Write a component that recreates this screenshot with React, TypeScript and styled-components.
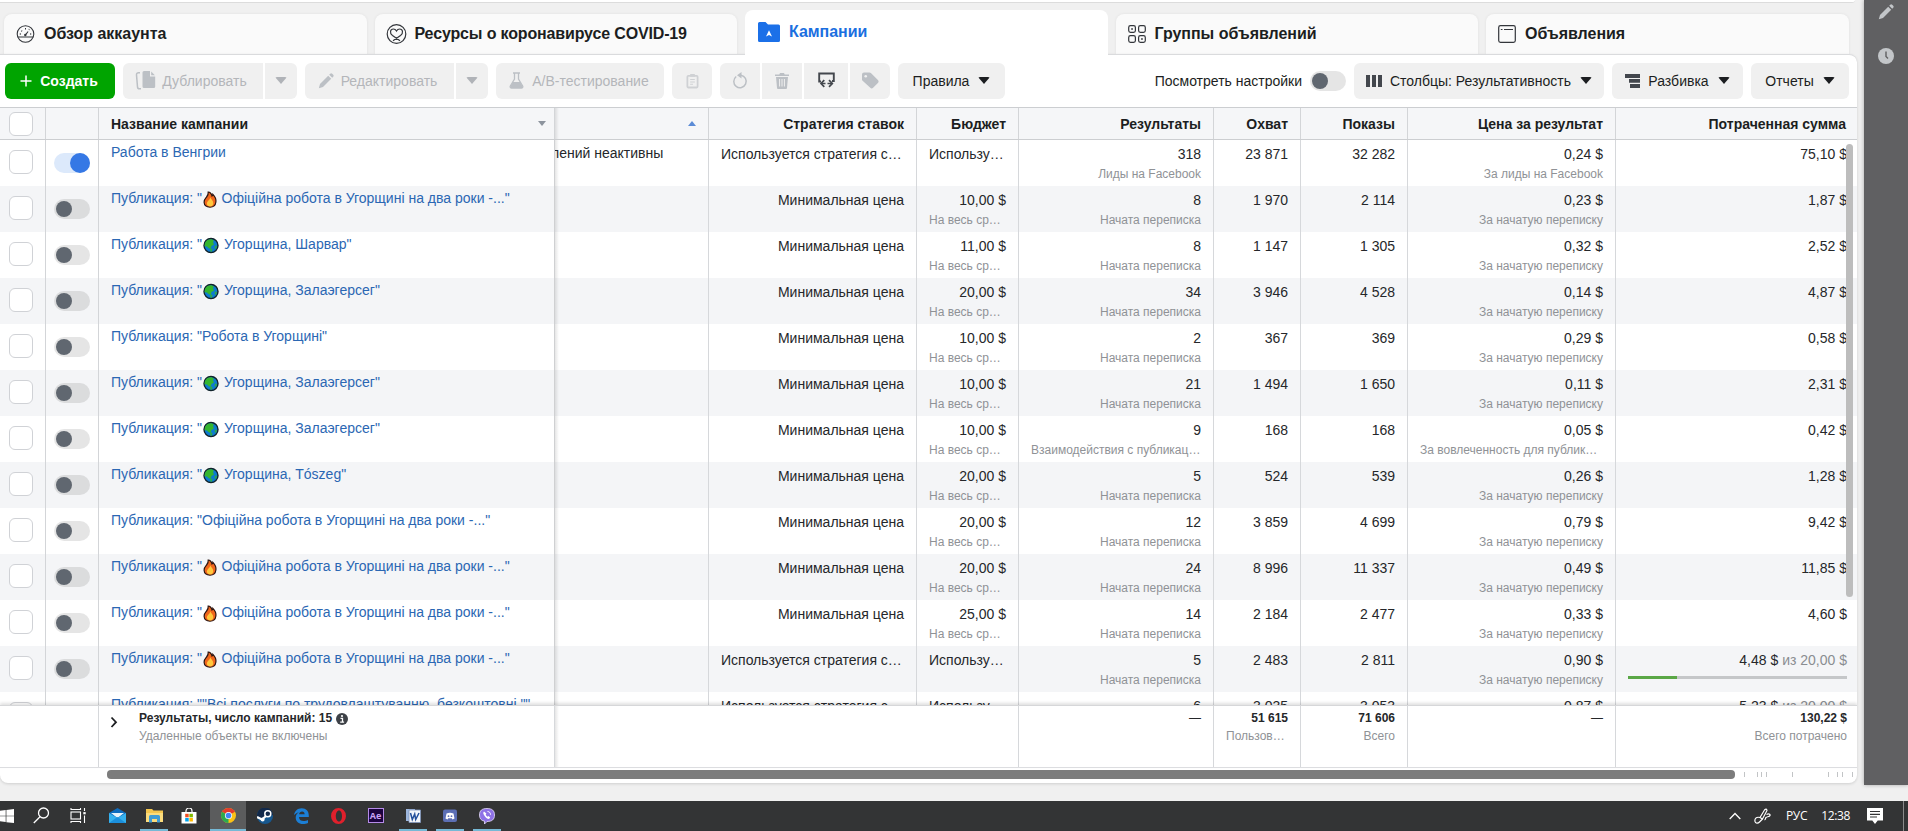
import React from 'react';
import styled, { createGlobalStyle, css } from 'styled-components';

const Global = createGlobalStyle`
  * { box-sizing: border-box; }
  html, body { margin: 0; padding: 0; overflow: hidden; }
  body { background: #f0f0f0; font-family: "Liberation Sans", Arial, sans-serif; font-size: 14px; color: #1c1e21; }
`;

/* ---------- page frame ---------- */
const Screen = styled.div`
  width: 1908px; height: 831px; overflow: hidden;
  display: flex; flex-direction: column;
`;
const Desktop = styled.div`
  height: 801px; display: flex; align-items: flex-start; background: #f0f0f0;
`;
const Main = styled.div`
  width: 1857px; height: 801px; display: flex; flex-direction: column;
`;
const TopStrip = styled.div`
  width: 1855px; height: 3px; flex: none; background: #fff;
  border-bottom: 1px solid #dcdcdc; border-radius: 0 0 6px 0;
`;
const SideRail = styled.div`
  width: 44px; height: 785px; margin-left: 7px; background: #606062;
  box-shadow: 0 0 4px rgba(0, 0, 0, .3);
  display: flex; flex-direction: column; align-items: center;
  padding-top: 4px; gap: 28px; svg { display: block; }
`;

/* ---------- tabs ---------- */
const Tabs = styled.div`
  height: 51px; flex: none; display: flex; align-items: flex-end; gap: 8px; padding-left: 4px;
`;
const Tab = styled.div<{ $active?: boolean; $tight?: boolean }>`
  width: 362.5px; height: 40px; flex: none; display: flex; align-items: center;
  padding: 0 0 1px ${p => (p.$tight ? 11 : 12)}px; gap: ${p => (p.$tight ? 8 : 9)}px;
  font-size: 16px; font-weight: 700; letter-spacing: ${p => (p.$tight ? -0.15 : -0.03)}px; white-space: nowrap;
  background: #fafafa; border-radius: 8px 8px 0 0; color: #1c1e21;
  box-shadow: 0 0 3px rgba(0, 0, 0, .07);
  svg { flex: none; }
  ${p => p.$active && css`
    height: 45px; margin-bottom: -1px; padding: 0 0 2px 13px; background: #fff; color: #1b6fe0; z-index: 1; box-shadow: none;
  `}
`;

/* ---------- panel ---------- */
const Panel = styled.div`
  height: 729px; flex: none; background: #fff; border-top: 1px solid #dadbdd;
  border-radius: 0 8px 8px 8px; box-shadow: 0 1px 3px rgba(0, 0, 0, .14);
  display: flex; flex-direction: column; overflow: hidden;
`;
const Toolbar = styled.div`
  height: 52px; flex: none; padding: 8px 8px 0 5px; display: flex; gap: 8px;
`;
const Group = styled.div`display: flex; gap: 2px; height: 36px;`;
const Spacer = styled.div`flex: 1;`;
const Btn = styled.div<{ $w: number; $dim?: boolean; $green?: boolean; $pos?: 'first' | 'mid' | 'last'; $gap?: number; $pr?: number }>`
  width: ${p => p.$w}px; height: 36px; flex: none; display: flex; align-items: center; justify-content: center;
  gap: ${p => p.$gap ?? 8}px; padding: 0 ${p => p.$pr || 0}px 1px 0;
  white-space: nowrap; background: ${p => (p.$green ? '#00a400' : '#f0f0f0')};
  color: ${p => (p.$green ? '#fff' : p.$dim ? '#b4b6ba' : '#1c1e21')};
  font-weight: ${p => (p.$green ? 700 : 400)};
  border-radius: ${p => (p.$pos === 'first' ? '6px 0 0 6px' : p.$pos === 'mid' ? '0' : p.$pos === 'last' ? '0 6px 6px 0' : '6px')};
  svg { flex: none; }
`;
const SettingsLabel = styled.div`
  display: flex; align-items: center; height: 36px; gap: 8px; white-space: nowrap;
`;
const Caret = styled.i<{ $c?: string; $ml?: number }>`
  border: 6px solid transparent; border-bottom: 0; border-top: 7px solid ${p => p.$c || '#1c1e21'};
  border-radius: 2px; margin: 0 0 0 ${p => p.$ml || 0}px;
`;
const SortMark = styled.i<{ $up?: boolean }>`
  border: 4px solid transparent;
  ${p => (p.$up ? 'border-top: 0; border-bottom: 5px solid #5b8bd6;' : 'border-bottom: 0; border-top: 5px solid #8d949e; margin-right: -4px;')}
`;

/* ---------- table ---------- */
const columns = '46px 53px 456px 154px 208px 102px 195px 87px 107px 208px 241px';
const edgeShade = 'linear-gradient(90deg, rgba(0, 0, 0, .1), rgba(0, 0, 0, 0) 4px)';
const HeadRow = styled.div`
  height: 33px; flex: none; display: grid; grid-template-columns: ${columns};
  background: #f5f6f8; border-top: 1px solid #ccced1; border-bottom: 1px solid #ccced1;
`;
const HeadCell = styled.div<{ $between?: boolean; $shade?: boolean }>`
  display: flex; align-items: center; justify-content: ${p => (p.$between ? 'space-between' : 'flex-end')};
  padding: 0 12px; font-weight: 700; white-space: nowrap; border-right: 1px solid #d3d5d8;
  background: ${p => (p.$shade ? edgeShade : 'none')};
  &:last-child { border-right: 0; padding-right: 11px; }
`;
const Body = styled.div`
  position: relative; height: 565px; flex: none; overflow: hidden;
`;
const Row = styled.div<{ $alt: boolean }>`
  height: 46px; display: grid; grid-template-columns: ${columns};
  background: ${p => (p.$alt ? '#f4f5f7' : '#fff')};
`;
const Cell = styled.div`
  padding: 6px 12px 0 12px; border-right: 1px solid #d6d8db; overflow: hidden; white-space: nowrap;
  text-align: right; color: #25272a;
  &:last-child { border-right: 0; padding-right: 10px; }
`;
const NameCell = styled(Cell)`
  border-right-color: #cfd0d2; padding-top: 4px; text-align: left;
`;
const StatusCell = styled(Cell)`
  padding: 5px 0 0; text-align: left; text-indent: -4px; line-height: 16px; background: ${edgeShade};
`;
const IconCell = styled.div<{ $pt: number; $pl?: number }>`
  border-right: 1px solid #d3d5d8; display: flex; align-items: flex-start;
  padding: ${p => p.$pt}px 0 0 ${p => p.$pl ?? 9}px;
`;
const Name = styled.div`
  color: #2b67b3; height: 16px; line-height: 16px;
  svg { vertical-align: -3px; margin: -2px 0; }
`;
const Value = styled.div<{ $left?: boolean }>`
  height: 16px; line-height: 16px; text-align: ${p => (p.$left ? 'left' : 'right')};
  i { font-style: normal; color: #8a8d91; }
`;
const Sub = styled.div<{ $left?: boolean }>`
  margin-top: 5px; height: 15px; line-height: 15px; font-size: 12px; color: #8f9296;
  text-align: ${p => (p.$left ? 'left' : 'right')};
`;
const CheckBox = styled.div`
  width: 24px; height: 24px; border: 1px solid #d0d2d6; border-radius: 6px; background: #fff;
`;
const Track = styled.div<{ $on?: boolean }>`
  width: 36px; height: 20px; border-radius: 10px; flex: none; display: flex; align-items: center;
  padding: ${p => (p.$on ? 0 : '0 2px')}; justify-content: ${p => (p.$on ? 'flex-end' : 'flex-start')};
  background: ${p => (p.$on ? '#dce9fb' : 'rgba(0, 0, 0, .1)')};
  &::after {
    content: ''; border-radius: 50%;
    width: ${p => (p.$on ? 20 : 16)}px; height: ${p => (p.$on ? 20 : 16)}px;
    background: ${p => (p.$on ? '#3578e5' : '#606770')};
  }
`;
const Progress = styled.div`
  margin-top: 8px; width: 219px; height: 3px; background: #c5c7c9;
  &::before { content: ''; display: block; width: 49px; height: 3px; background: #5aa746; }
`;
const VScroll = styled.div`
  position: absolute; right: 4px; top: 4px; width: 7px; height: 453px; border-radius: 4px; background: #bdbdbd; z-index: 2;
`;

/* ---------- footer ---------- */
const Foot = styled.div`
  height: 63px; flex: none; display: grid; position: relative; z-index: 2; background: #fff;
  grid-template-columns: 99px 456px 464px 195px 87px 107px 208px 241px;
  border-top: 1px solid #d6d7d9; border-bottom: 1px solid #dcdde0; box-shadow: 0 -2px 3px rgba(0, 0, 0, .12);
`;
const FootCell = styled(Cell)<{ $shade?: boolean }>`
  padding-top: 5px; font-size: 12px; background: ${p => (p.$shade ? edgeShade : 'none')};
  b, span { display: block; height: 15px; line-height: 15px; }
  span { margin-top: 3px; color: #8f9296; }
`;
const FootNote = styled.span<{ $left?: boolean }>`
  text-align: ${p => (p.$left ? 'left' : 'inherit')};
`;
const FootTitle = styled(FootCell)`
  display: flex; gap: 20px; text-align: left; padding-left: 11px;
  b { display: flex; align-items: center; gap: 4px; }
`;
const ScrollRow = styled.div`
  flex: 1; padding: 2px 4px 0 107px; display: flex; align-items: flex-start;
`;
const HThumb = styled.div`width: 1628px; height: 9px; border-radius: 4px; background: #7c7c7c; flex: none;`;

/* ---------- taskbar ---------- */
const Taskbar = styled.div`
  height: 30px; flex: none; background: #333435; display: flex; color: #fff;
`;
const Task = styled.div<{ $w: number; $ml?: number; $state?: 'open' | 'active' }>`
  width: ${p => p.$w}px; height: 30px; display: flex; align-items: center; justify-content: center;
  margin-left: ${p => p.$ml || 0}px; padding-bottom: 1px;
  background-color: ${p => (p.$state === 'active' ? '#5b5c5d' : 'transparent')};
  background-image: ${p => (p.$state ? 'linear-gradient(#76b9d6, #76b9d6)' : 'none')};
  background-repeat: no-repeat; background-position: center bottom;
  background-size: ${p => (p.$state === 'active' ? '100%' : '28px')} 2px;
  flex: none;
`;
const Tray = styled.div`
  margin-left: auto; display: flex; align-items: center; font: 12px "Open Sans", "Noto Sans", sans-serif;
  padding-right: 4px; letter-spacing: -0.35px;
`;
const TrayItem = styled.div<{ $ml: number }>`
  margin-left: ${p => p.$ml}px; padding-bottom: 1px; display: flex; white-space: nowrap;
`;
const Peek = styled.div`width: 1px; height: 30px; background: #8a8a8a; margin-left: 20px;`;

/* ---------- pictures ---------- */
const Fire = () => (
  <svg width="19.500" height="17" viewBox="0 0 19.500 17">
    <path d="M6.200 1C7.400.8 9.600 2.400 10 5c.6-.4.9-1 .9-1.700C13 5.400 14.300 8 13.900 11c-.4 3.200-2.700 5.200-5.900 5.200S2.300 14.300 2.100 11.300C1.900 8.800 3.300 7.500 4.600 6 5.800 4.600 6.500 3.100 6.200 1z" fill="#f0661c" stroke="#2c1410" strokeWidth="1.200" />
    <path d="M8.300 6.300c.2 1.800 3 3.200 3 5.900 0 2-1.400 3.200-3.200 3.200S4.900 14.300 4.900 12.500c0-2.300 2.900-3.200 3.400-6.200z" fill="#ffc83d" />
  </svg>
);
const Globe = () => (
  <svg width="22" height="17" viewBox="0 0 22 17">
    <circle cx="9" cy="8.500" r="7" fill="#0d7bd0" stroke="#10232b" strokeWidth="1.400" />
    <path d="M3 6C4.500 3.200 6.500 2.200 9.500 2.300l2.300 1.200-.8 2 1 2-2.500 1.500-1 3-2-1-1.500-1.500-2.500-.3z" fill="#35b52f" />
    <path d="M8 11l2.500 1-.5 2.500-1.500.5z M13 8.500l2 .5-1 3-1.500-1z" fill="#2fa84a" />
  </svg>
);
const Gauge = () => (
  <svg width="19" height="18" viewBox="0 0 18 18" fill="none" stroke="#33363b" strokeWidth="1.100">
    <circle cx="9" cy="9" r="8.300" /><path d="M1.200 12h15.600M9 9.800l2.600-3.300" />
    <path d="M3.300 9h1M4.800 5.700l.8.600M8.500 3.800h1M12.300 4.700l.6-.4M13.700 9h1" strokeWidth="1.400" />
    <circle cx="8.800" cy="10" r="1.200" fill="#33363b" stroke="none" />
  </svg>
);
const Ribbon = () => (
  <svg width="21" height="20" viewBox="0 0 21 20" fill="none" stroke="#33363b" strokeWidth="1.200">
    <circle cx="10.500" cy="10" r="9.300" />
    <path d="M14 16.800L6.500 11.500C3.200 9 4.300 5 7.300 5c1.600 0 2.600.9 3.200 2C11.100 5.900 12.100 5 13.700 5c3 0 4.100 4 .8 6.500L7 16.800" />
  </svg>
);
const FolderIcon = () => (
  <svg width="22" height="20" viewBox="0 0 22 20">
    <path d="M0 1.500A1.500 1.500 0 0 1 1.500 0h6L10 2.500h10.500A1.500 1.500 0 0 1 22 4v14.500a1.500 1.500 0 0 1-1.500 1.500h-19A1.500 1.500 0 0 1 0 18.500z" fill="#1b70e8" />
    <path d="M11 8.200l3 6.300-3-1.600-3 1.600z" fill="#fff" />
  </svg>
);
const FourIcon = () => (
  <svg width="18" height="18" viewBox="0 0 18 18" fill="none" stroke="#33363b" strokeWidth="1.200">
    {[[.7, .7], [10.600, .7], [.7, 10.700], [10.600, 10.700]].map(([x, y], i) => <rect key={i} x={x} y={y} width="6.700" height="6.600" rx="1.800" />)}
    <path d="M3.200 4h1.700M13.100 14h1.700" strokeWidth="1.600" />
  </svg>
);
const AdIcon = () => (
  <svg width="18" height="18" viewBox="0 0 18 18" fill="none" stroke="#33363b" strokeWidth="1.200">
    <rect x=".7" y=".7" width="16.600" height="16.600" rx="1.800" /><path d="M2.800 4.500h1.700M6 4.500h9" />
  </svg>
);
const Plus = () => <svg width="12" height="12" viewBox="0 0 12 12" stroke="#fff" strokeWidth="1.500"><path d="M6 .5v11M.5 6h11" /></svg>;
const Dup = () => (
  <svg width="21" height="19" viewBox="0 0 21 19">
    <path d="M5 1.700H3.500a2 2 0 0 0-2 2.200l1 12a2 2 0 0 0 2 1.900H6" fill="none" stroke="#bcc0c5" strokeWidth="1.500" />
    <path d="M9 0h6v5.500h5.200V15.500a1.500 1.500 0 0 1-1.500 1.500H9a1.500 1.500 0 0 1-1.500-1.500v-14A1.500 1.500 0 0 1 9 0z M16.200.4l3.700 3.900h-3.700z" fill="#bcc0c5" />
  </svg>
);
const Pencil = ({ c = '#bcc0c5', s = 16 }: { c?: string; s?: number }) => (
  <svg width={s} height={s} viewBox="0 0 16 16" fill={c}>
    <path d="M10.200 2.800l3 3-8.200 8.200L.8 15.200 2 11z M11.200 1.800l1-1a1.500 1.500 0 0 1 2 0l1 1a1.500 1.500 0 0 1 0 2l-1 1z" />
  </svg>
);
const Flask = () => (
  <svg width="15" height="17" viewBox="0 0 15 17">
    <path d="M4 1h7M5.500 1v6L1.300 14a1.500 1.500 0 0 0 1.300 2.200h9.800a1.500 1.500 0 0 0 1.300-2.200L9.500 7V1" fill="none" stroke="#bcc0c5" strokeWidth="1.300" />
    <path d="M3.800 10h7.400l2.400 4.500c.3.900-.3 1.500-1.200 1.500H2.600c-.9 0-1.500-.6-1.200-1.500z" fill="#bcc0c5" />
  </svg>
);
const Clip = () => (
  <svg width="13" height="16" viewBox="0 0 14 16" fill="none" stroke="#cfd1d4" strokeWidth="1.900">
    <rect x="1.500" y="2.500" width="11" height="12.500" rx="1" /><path d="M4.500 2h5" strokeWidth="3" /><path d="M4.500 6.500h5M4.500 9h5M4.500 11.500h3" strokeWidth="1.100" />
  </svg>
);
const Undo = () => (
  <svg width="16" height="17" viewBox="0 0 16 17">
    <path d="M4.200 4.500A6.200 6.200 0 1 0 9 3.300" fill="none" stroke="#bcc0c5" strokeWidth="1.500" /><path d="M9.500 0v6.500L5 3.300z" fill="#bcc0c5" />
  </svg>
);
const Trash = () => (
  <svg width="14" height="16" viewBox="0 0 14 16">
    <path d="M5 0h4l.7 1.500H14V3H0V1.500h4.300z M1 4h12l-1 11a1 1 0 0 1-1 1H3a1 1 0 0 1-1-1z" fill="#bcc0c5" />
    <path d="M4.600 6v7.500M7 6v7.500M9.400 6v7.500" stroke="#f0f0f0" />
  </svg>
);
const Swap = () => (
  <svg width="17" height="17" viewBox="0 0 17 17" fill="none" stroke="#43474d" strokeWidth="1.900">
    <path d="M3 9.500H1.200V1.500h14.600v7.500H14" /><path d="M3.500 11.500h4M9.500 11.500H14" strokeWidth="1.600" /><path d="M6.300 8.200L3 11.500l3.300 3.300M11 8.200l3.300 3.300L11 14.800" strokeWidth="1.700" />
  </svg>
);
const Tag = () => (
  <svg width="17" height="17" viewBox="0 0 17 17">
    <path d="M0 2.500A2 2 0 0 1 2 .5h5.500a2 2 0 0 1 1.400.6l7 7a2 2 0 0 1 0 2.800l-4.800 4.800a2 2 0 0 1-2.800 0L.6 8.800A2 2 0 0 1 0 7.400z" fill="#bcc0c5" /><circle cx="3.700" cy="4.200" r="1.300" fill="#f0f0f0" />
  </svg>
);
const Cols = () => <svg width="16" height="12" viewBox="0 0 16 12" fill="#43474d"><path d="M0 0h4v12H0zM6 0h4v12H6zM12 0h4v12h-4z" /></svg>;
const Breakdown = () => <svg width="15" height="14" viewBox="0 0 15 14" fill="#43474d"><path d="M0 0h15v4H0zM4 5h11v3.800H4zM5 10h10v4H5z" /></svg>;
const Clock = () => (
  <svg width="16" height="16" viewBox="0 0 16 16"><circle cx="8" cy="8" r="8" fill="#c3c6c9" /><path d="M8 3.500v5l2 2" stroke="#606062" strokeWidth="1.400" fill="none" /></svg>
);
const Info = () => (
  <svg width="12" height="12" viewBox="0 0 12 12"><circle cx="6" cy="6" r="6" fill="#3d4147" /><path d="M4.500 5.300h2v4M4.200 9.200h3.900" stroke="#fff" strokeWidth="1.300" fill="none" /><circle cx="6" cy="3" r="1.100" fill="#fff" /></svg>
);
const Chevron = () => <svg width="9" height="30" viewBox="0 0 9 30" fill="none" stroke="#1c1e21" strokeWidth="1.800"><path d="M1.500 6.500l4.500 4.700L1.500 16" /></svg>;

const Ticks = () => (
  <svg width="118" height="9" viewBox="1735 0 118 9" stroke="#c2c4c6">
    {[1744.500, 1757.500, 1761.500, 1766.500, 1792.500, 1828.500, 1837.500, 1842.500, 1852.500].map(x => <path key={x} d={`M${x} 2v5`} />)}
  </svg>
);

const Win = () => <svg width="16" height="16" viewBox="0 0 16 16" fill="#fff"><path d="M0 2l6.500-.9v6.500H0zM7.300 1L16 0v7.600H7.300zM0 8.400h6.500v6.500L0 14zM7.300 8.400H16V16l-8.700-1z" /></svg>;
const SearchT = () => <svg width="17" height="17" viewBox="0 0 17 17" fill="none" stroke="#fff" strokeWidth="1.300"><circle cx="10.500" cy="6" r="5" /><path d="M7 9.700L.8 16" /></svg>;
const TaskView = () => (
  <svg width="17" height="15" viewBox="0 0 17 15" fill="none" stroke="#fff" strokeWidth="1.100"><rect x="1" y="4" width="9.500" height="7" /><path d="M1 0v1.500h9.500V0M1 15v-1.500h9.500V15M14.500 0v3M14.500 7.500V15" /><path d="M13.300 5.200h2.400" strokeWidth="2.200" /></svg>
);
const MailT = () => <svg width="17" height="15" viewBox="0 0 17 15"><path d="M0 5L8.500 0 17 5v10H0z" fill="#0f6cbd" /><path d="M2 5h13L8.500 10z" fill="#e8f4fc" /><path d="M0 5l8.500 5L17 5v10H0z" fill="#35b1ee" /><path d="M0 15l8.500-6L17 15z" fill="#1b8fdc" /></svg>;
const FolderT = () => <svg width="17" height="15" viewBox="0 0 17 15"><path d="M0 1h6l1.500 1.500H17V14H0z" fill="#f4c64f" /><path d="M0 5h17v9H0z" fill="#fbdc7d" /><path d="M3 14.500V8.500A1.500 1.500 0 0 1 4.500 7h8A1.500 1.500 0 0 1 14 8.500v6h-3V11H6v3.500z" fill="#3f9bd4" /></svg>;
const StoreT = () => <svg width="16" height="16" viewBox="0 0 16 16"><path d="M5 5V3a3 3 0 0 1 6 0v2" fill="none" stroke="#fff" strokeWidth="1.200" /><path d="M.5 4h15v11.500h-15z" fill="#fff" /><path d="M4.200 5.800h3.500v3.500H4.200z" fill="#f25022" /><path d="M8.400 5.800h3.500v3.500H8.400z" fill="#7fba00" /><path d="M4.200 10h3.500v3.500H4.200z" fill="#00a4ef" /><path d="M8.400 10h3.500v3.500H8.400z" fill="#ffb900" /></svg>;
const ChromeT = () => (
  <svg width="15" height="15" viewBox="0 0 16 16"><circle cx="8" cy="8" r="8" fill="#fbc116" /><path d="M8 8L1.100 4A8 8 0 0 1 14.900 4z" fill="#e33b2e" /><path d="M8 8L1.100 4A8 8 0 0 0 8 16z" fill="#2da94f" /><circle cx="8" cy="8" r="3.800" fill="#fff" /><circle cx="8" cy="8" r="3" fill="#4285f4" /></svg>
);
const SteamT = () => <svg width="16" height="16" viewBox="0 0 16 16"><circle cx="8" cy="8" r="8" fill="#17588f" /><path d="M0 8a8 8 0 0 1 16-1L9 9 6 11 1 10z" fill="#12294a" /><circle cx="10.800" cy="5.700" r="3" fill="none" stroke="#fff" strokeWidth="1.500" /><path d="M0 9l5 2.500L9 8" stroke="#fff" strokeWidth="2.300" fill="none" /><circle cx="5.600" cy="11.500" r="2" fill="#fff" /></svg>;
const EdgeT = () => <svg width="15" height="16" viewBox="0 0 15 16"><path fillRule="evenodd" d="M0 7.300C.5 3 3.500.2 7.700.2c4.500 0 7.100 3 7.100 7.200v1.700H5c.2 3 2.200 4 4.500 4 1.800 0 3.200-.5 4.500-1.200v3c-1.500.8-3.200 1.100-5 1.100-4.400 0-7.300-2.500-7.300-6.500 0-2.300 1.200-4.200 3.200-5.300C2.800 4.900 1 5.800 0 7.300zM5.100 6.200h5.500c0-1.600-.8-2.700-2.500-2.700-1.600 0-2.700 1-3 2.700z" fill="#1c7fd6" /></svg>;
const OperaT = () => <svg width="15" height="16" viewBox="0 0 15 16"><path fillRule="evenodd" d="M7.500 0a7.500 8 0 1 0 0 16 7.500 8 0 0 0 0-16zM8 2.500c1.900 0 3 2.500 3 5.500s-1.100 5.500-3 5.500S4.800 11 4.800 8 6.100 2.500 8 2.500z" fill="#e0202c" /></svg>;
const AeT = styled.div`
  width: 16px; height: 15px; border: 1px solid #b58be8; background: #1d0340; color: #c9a2f5;
  font: 700 9px/13px "Open Sans", sans-serif; text-align: center;
`;
const WordT = () => <svg width="16" height="14" viewBox="0 0 16 14"><path d="M1 0h9v12H1z" fill="#9db6dd" /><path d="M4 1h11.500v12.500H4z" fill="#f3f6fb" stroke="#7f95bd" strokeWidth=".8" /><path d="M5.500 4l1.800 6.500 2.400-5.500 1 5.500L14 4" fill="none" stroke="#24509c" strokeWidth="1.500" /></svg>;
const DiscordT = () => <svg width="14" height="14" viewBox="0 0 14 14"><rect y=".5" width="14" height="12.500" rx="2" fill="#5c6fb5" /><path d="M3.500 4.500q3.500-1.500 7 0l1 5-2 1-.8-1.200H5.300L4.500 10.500l-2-1z" fill="#fff" /><circle cx="5.500" cy="7.200" r=".9" fill="#5c6fb5" /><circle cx="8.500" cy="7.200" r=".9" fill="#5c6fb5" /></svg>;
const ViberT = () => <svg width="16" height="16" viewBox="0 0 16 16"><path d="M8 .5c5 0 7.500 2 7.500 6.500S13 13.500 8 13.500L5.500 16v-2.800C2 12.500.5 10.500.5 7 .5 2.500 3 .5 8 .5z" fill="#8f72e6" stroke="#e7defa" strokeWidth=".8" /><path d="M5 3.500c-1.500 1-.5 3 1 5s3.500 3 4.500 2l.7-1-1.700-1.400-1 .6C7.500 8 7 7.300 6.700 6.400l.7-.9z" fill="#fff" /><path d="M8.500 3.500c2 .2 3 1.300 3 3.200" stroke="#fff" fill="none" /></svg>;
const UpT = () => <svg width="12" height="8" viewBox="0 0 12 8" fill="none" stroke="#fff" strokeWidth="1.300"><path d="M.7 7L6 1.500 11.300 7" /></svg>;
const PenT = () => <svg width="17" height="16" viewBox="0 0 17 16" fill="none" stroke="#fff" strokeWidth="1.200"><path d="M6 9.500L10.500 2q2-2 2.500.5L8.500 11z" /><path d="M6 9.500C2 8.500.5 11 1 13.500c.3 2 3 2 4.500.5L8.500 11M12.500 6.500c2-1 4-.5 3.500 1s-3 1-4 2 0 2-1.500 2.500" /></svg>;
const NoteT = () => <svg width="16" height="16" viewBox="0 0 16 16"><path d="M0 0h16v12.500h-5.300L8 16l-2.700-3.500H0z" fill="#fff" /><path d="M3 3.500h10M3 6.300h10M3 9h7" stroke="#333435" strokeWidth="1.200" /></svg>;

/* ---------- data ---------- */
type Campaign = {
  name: string; mark?: 'fire' | 'globe'; budget: string; results: string; reach: string; views: string;
  cost: string; spent: string; kind?: string; costKind?: string; clipped?: boolean; limit?: string; shared?: boolean; on?: boolean;
};
const msg = 'Начата переписка';
const work = 'Офіційна робота в Угорщині на два роки -..."';
const rows: Campaign[] = [
  { name: 'Работа в Венгрии', budget: '', shared: true, on: true, results: '318', kind: 'Лиды на Facebook', reach: '23 871', views: '32 282', cost: '0,24 $', costKind: 'За лиды на Facebook', spent: '75,10 $' },
  { name: work, mark: 'fire', budget: '10,00 $', results: '8', reach: '1 970', views: '2 114', cost: '0,23 $', spent: '1,87 $' },
  { name: 'Угорщина, Шарвар"', mark: 'globe', budget: '11,00 $', results: '8', reach: '1 147', views: '1 305', cost: '0,32 $', spent: '2,52 $' },
  { name: 'Угорщина, Залаэгерсег"', mark: 'globe', budget: '20,00 $', results: '34', reach: '3 946', views: '4 528', cost: '0,14 $', spent: '4,87 $' },
  { name: 'Публикация: "Робота в Угорщині"', budget: '10,00 $', results: '2', reach: '367', views: '369', cost: '0,29 $', spent: '0,58 $' },
  { name: 'Угорщина, Залаэгерсег"', mark: 'globe', budget: '10,00 $', results: '21', reach: '1 494', views: '1 650', cost: '0,11 $', spent: '2,31 $' },
  { name: 'Угорщина, Залаэгерсег"', mark: 'globe', budget: '10,00 $', results: '9', reach: '168', views: '168', cost: '0,05 $', spent: '0,42 $', kind: 'Взаимодействия с публикац…', costKind: 'За вовлеченность для публик…', clipped: true },
  { name: 'Угорщина, Tószeg"', mark: 'globe', budget: '20,00 $', results: '5', reach: '524', views: '539', cost: '0,26 $', spent: '1,28 $' },
  { name: 'Публикация: "' + work, budget: '20,00 $', results: '12', reach: '3 859', views: '4 699', cost: '0,79 $', spent: '9,42 $' },
  { name: work, mark: 'fire', budget: '20,00 $', results: '24', reach: '8 996', views: '11 337', cost: '0,49 $', spent: '11,85 $' },
  { name: work, mark: 'fire', budget: '25,00 $', results: '14', reach: '2 184', views: '2 477', cost: '0,33 $', spent: '4,60 $' },
  { name: work, mark: 'fire', budget: '', shared: true, results: '5', reach: '2 483', views: '2 811', cost: '0,90 $', spent: '4,48 $', limit: ' из 20,00 $' },
  { name: 'Публикация: ""Всі послуги по трудовлаштуванню, безкоштовні.""', budget: '', shared: true, results: '6', reach: '3 035', views: '3 053', cost: '0,87 $', spent: '5,23 $', limit: ' из 20,00 $' },
];

const CampaignRow = ({ c, alt }: { c: Campaign; alt: boolean }) => (
  <Row $alt={alt}>
    <IconCell $pt={10}><CheckBox /></IconCell>
    <IconCell $pt={13} $pl={8}><Track $on={c.on} /></IconCell>
    <NameCell>
      <Name>
        {c.mark && 'Публикация: "'}
        {c.mark === 'fire' && <Fire />}
        {c.mark === 'globe' && <Globe />}
        {c.name}
      </Name>
    </NameCell>
    <StatusCell>{c.on && 'лений неактивны'}</StatusCell>
    <Cell><Value $left={c.shared}>{c.shared ? 'Используется стратегия с…' : 'Минимальная цена'}</Value></Cell>
    <Cell>
      <Value $left={c.shared}>{c.shared ? 'Использу…' : c.budget}</Value>
      {!c.shared && <Sub $left>На весь ср…</Sub>}
    </Cell>
    <Cell><Value>{c.results}</Value><Sub $left={c.clipped}>{c.kind || msg}</Sub></Cell>
    <Cell><Value>{c.reach}</Value></Cell>
    <Cell><Value>{c.views}</Value></Cell>
    <Cell><Value>{c.cost}</Value><Sub $left={c.clipped}>{c.costKind || 'За начатую переписку'}</Sub></Cell>
    <Cell><Value>{c.spent}{c.limit && <i>{c.limit}</i>}</Value>{c.limit && <Progress />}</Cell>
  </Row>
);

export default function App() {
  return (
    <Screen>
      <Global />
      <Desktop>
        <Main>
          <TopStrip />
          <Tabs>
            <Tab><Gauge />Обзор аккаунта</Tab>
            <Tab $tight><Ribbon />Ресурсы о коронавирусе COVID-19</Tab>
            <Tab $active><FolderIcon />Кампании</Tab>
            <Tab><FourIcon />Группы объявлений</Tab>
            <Tab><AdIcon />Объявления</Tab>
          </Tabs>
          <Panel>
            <Toolbar>
              <Btn $w={110} $green $pr={2}><Plus />Создать</Btn>
              <Group>
                <Btn $w={140} $dim $pos="first" $gap={6} $pr={4}><Dup />Дублировать</Btn>
                <Btn $w={32} $pos="last"><Caret $c="#b0b3b8" /></Btn>
              </Group>
              <Group>
                <Btn $w={149} $dim $pos="first" $gap={7} $pr={4}><Pencil />Редактировать</Btn>
                <Btn $w={32} $pos="last"><Caret $c="#b0b3b8" /></Btn>
              </Group>
              <Btn $w={168} $dim $pr={2}><Flask />A/B-тестирование</Btn>
              <Btn $w={40}><Clip /></Btn>
              <Group>
                <Btn $w={40} $pos="first"><Undo /></Btn>
                <Btn $w={40} $pos="mid"><Trash /></Btn>
                <Btn $w={44} $pos="mid"><Swap /></Btn>
                <Btn $w={40} $pos="last"><Tag /></Btn>
              </Group>
              <Btn $w={107}>Правила<Caret $ml={1} /></Btn>
              <Spacer />
              <SettingsLabel>Посмотреть настройки<Track /></SettingsLabel>
              <Btn $w={250}><Cols />Столбцы: Результативность<Caret $ml={1} /></Btn>
              <Btn $w={131}><Breakdown />Разбивка<Caret $ml={1} /></Btn>
              <Btn $w={98}>Отчеты<Caret $ml={1} /></Btn>
            </Toolbar>
            <HeadRow>
              <IconCell $pt={4}><CheckBox /></IconCell>
              <HeadCell />
              <HeadCell $between>Название кампании<SortMark /></HeadCell>
              <HeadCell $shade><SortMark $up /></HeadCell>
              <HeadCell>Стратегия ставок</HeadCell>
              <HeadCell>Бюджет</HeadCell>
              <HeadCell>Результаты</HeadCell>
              <HeadCell>Охват</HeadCell>
              <HeadCell>Показы</HeadCell>
              <HeadCell>Цена за результат</HeadCell>
              <HeadCell>Потраченная сумма</HeadCell>
            </HeadRow>
            <Body>
              {rows.map((c, i) => <CampaignRow key={i} c={c} alt={i % 2 === 1} />)}
              <VScroll />
            </Body>
            <Foot>
              <FootCell />
              <FootTitle>
                <Chevron />
                <div><b>Результаты, число кампаний: 15<Info /></b><FootNote>Удаленные объекты не включены</FootNote></div>
              </FootTitle>
              <FootCell $shade />
              <FootCell>—</FootCell>
              <FootCell><b>51 615</b><FootNote $left>Пользов…</FootNote></FootCell>
              <FootCell><b>71 606</b><FootNote>Всего</FootNote></FootCell>
              <FootCell>—</FootCell>
              <FootCell><b>130,22 $</b><FootNote>Всего потрачено</FootNote></FootCell>
            </Foot>
            <ScrollRow><HThumb /><Ticks /></ScrollRow>
          </Panel>
        </Main>
        <SideRail><Pencil c="#c3c6c9" s={16} /><Clock /></SideRail>
      </Desktop>
      <Taskbar>
        <Task $w={14}><Win /></Task>
        <Task $w={55}><SearchT /></Task>
        <Task $w={18}><TaskView /></Task>
        <Task $w={46} $ml={7}><MailT /></Task>
        <Task $w={28} $state="open"><FolderT /></Task>
        <Task $w={42}><StoreT /></Task>
        <Task $w={36} $state="active"><ChromeT /></Task>
        <Task $w={37}><SteamT /></Task>
        <Task $w={37}><EdgeT /></Task>
        <Task $w={37}><OperaT /></Task>
        <Task $w={37}><AeT>Ae</AeT></Task>
        <Task $w={37} $state="open"><WordT /></Task>
        <Task $w={37} $state="open"><DiscordT /></Task>
        <Task $w={37} $state="open"><ViberT /></Task>
        <Tray>
          <TrayItem $ml={0}><UpT /></TrayItem>
          <TrayItem $ml={13}><PenT /></TrayItem>
          <TrayItem $ml={15}>РУС</TrayItem>
          <TrayItem $ml={14}>12:38</TrayItem>
          <TrayItem $ml={17}><NoteT /></TrayItem>
          <Peek />
        </Tray>
      </Taskbar>
    </Screen>
  );
}
